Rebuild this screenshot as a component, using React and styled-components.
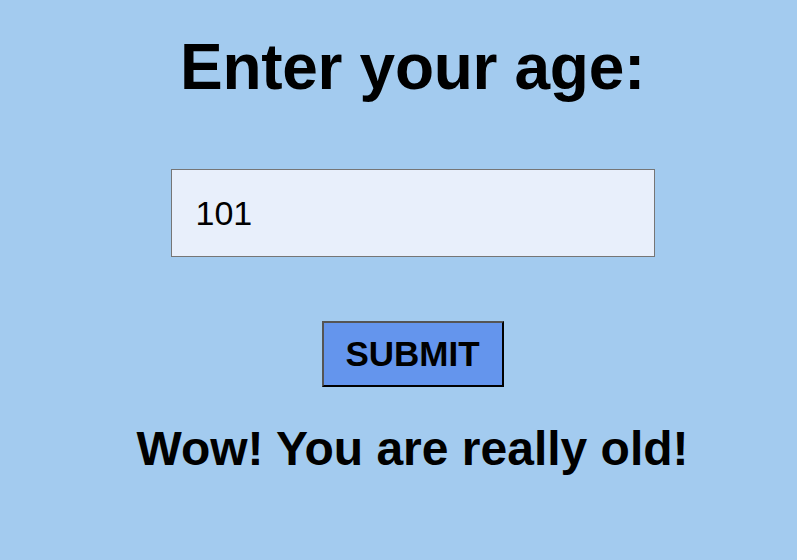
import React, { useState } from 'react';
import styled, { createGlobalStyle } from 'styled-components';

const GlobalStyle = createGlobalStyle`
  html, body {
    margin: 0;
    padding: 0;
    background: #a3cbef;
  }
  body {
    font-family: "Liberation Sans", Arial, sans-serif;
    color: #000;
  }
`;

const Page = styled.div`
  display: flex;
  flex-direction: column;
  align-items: center;
  min-height: 560px;
  padding-left: 28px;
  box-sizing: border-box;
`;

const Title = styled.h1`
  margin: 35px 0 0;
  font-size: 64px;
  line-height: 64px;
  font-weight: bold;
  letter-spacing: -0.3px;
`;

const AgeInput = styled.input`
  box-sizing: border-box;
  width: 484px;
  height: 88px;
  margin-top: 70px;
  padding: 0 24px;
  border: 1px solid #767676;
  background: #e8effb;
  font-family: "Liberation Sans", Arial, sans-serif;
  font-size: 34px;
  color: #000;
  outline: none;
`;

const SubmitButton = styled.button`
  box-sizing: border-box;
  width: 182px;
  height: 66px;
  margin-top: 64px;
  padding: 0;
  border: 2px solid;
  border-color: #555 #000 #000 #555;
  background: #6495ed;
  font-family: "Liberation Sans", Arial, sans-serif;
  font-size: 35px;
  font-weight: bold;
  color: #000;
  cursor: pointer;
`;

const Message = styled.p`
  margin: 38px 0 0;
  font-size: 48px;
  line-height: 48px;
  font-weight: bold;
`;

function getMessage(age) {
  const n = Number(age);
  if (age === '' || isNaN(n)) return '';
  if (n > 100) return 'Wow! You are really old!';
  if (n >= 18) return 'You are an adult.';
  return 'You are still young!';
}

export default function App() {
  const [age, setAge] = useState('101');
  const [message, setMessage] = useState(getMessage('101'));

  return (
    <Page>
      <GlobalStyle />
      <Title>Enter your age:</Title>
      <AgeInput value={age} onChange={e => setAge(e.target.value)} />
      <SubmitButton onClick={() => setMessage(getMessage(age))}>SUBMIT</SubmitButton>
      <Message>{message}</Message>
    </Page>
  );
}
